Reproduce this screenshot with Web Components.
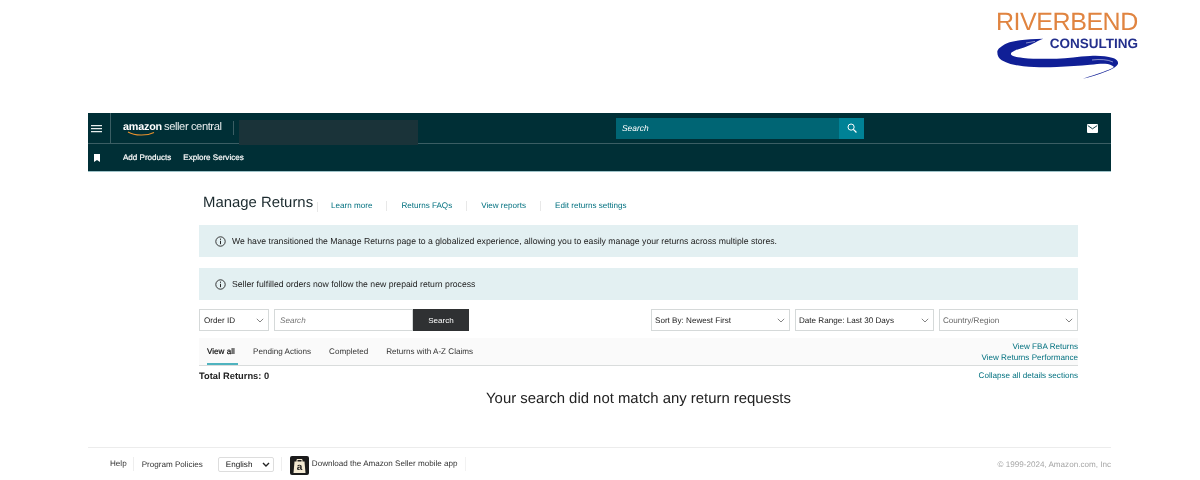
<!DOCTYPE html>
<html>
<head>
<meta charset="utf-8">
<title>Manage Returns</title>
<style>
  html, body { margin: 0; padding: 0; background: #fff; }
  body { font-family: "Liberation Sans", Arial, sans-serif; color: #111; width: 1200px; height: 480px; overflow: hidden; text-rendering: geometricPrecision; filter: blur(0.4px); }
</style>
</head>
<body>
<rb-logo></rb-logo>
<seller-header></seller-header>
<returns-page>
  <page-head></page-head>
  <info-notice>We have transitioned the Manage Returns page to a globalized experience, allowing you to easily manage your returns across multiple stores.</info-notice>
  <info-notice style="margin-top:11px">Seller fulfilled orders now follow the new prepaid return process</info-notice>
  <filter-bar></filter-bar>
  <return-tabs></return-tabs>
  <total-row></total-row>
  <empty-message>Your search did not match any return requests</empty-message>
</returns-page>
<seller-footer></seller-footer>

<script>
class RbLogo extends HTMLElement {
  constructor() {
    super();
    this.attachShadow({ mode: "open" });
    this.shadowRoot.innerHTML = `
      <style>
        :host { display: flex; justify-content: flex-end; height: 113px; padding-right: 61px; box-sizing: border-box; }
        .logo { width: 143px; height: 80px; margin-top: 8px; position: relative; }
        .name { font-size: 25px; line-height: 29px; color: #e08440; letter-spacing: -0.45px; white-space: nowrap; }
        .sub { position: absolute; right: 1px; top: 28px; font-size: 13.5px; line-height: 15px; font-weight: bold; color: #232f8c; white-space: nowrap; }
        svg { position: absolute; left: 0; top: 0; }
      </style>
      <div class="logo">
        <svg width="143" height="80" viewBox="0 0 143 80">
          <path fill="#101f96" d="M47.3 30.7 C38 31 30 31.5 24 32.3 C16 33.5 10 35 7.3 37.3 C3 40 1.3 42 1.3 44 C1.3 48 3 50.5 5.7 52.3 C12 56 20 57.5 27.3 58.3 C40 59.5 50 59.5 60.7 59 C72 58.5 84 57.5 94 56.7 C100 56 105 55.5 109 55.7 C113 56 116 57 118 59 C115 61 111 62.5 107 64 C100 66.5 93 68.5 87 70.7 C95 69.5 103 66 110.7 63.3 C116 61 120.5 59 122 55.7 C122.5 53 120 51 117 50 C110 48 102 47.5 94 48 C82 48.5 72 50.3 60.7 50.7 C48 51 37 51 27.3 50 C20 49.2 16 48 15 46.5 C14.5 45 16 44 18 43 C21 41.5 24 40.5 27.3 39.7 C33 38 40 33.5 47.3 30.7 Z"/>
          <path fill="none" stroke="#fff" stroke-width="0.5" d="M96 52 C104 51 112 51.5 117 54"/>
          <path fill="none" stroke="#fff" stroke-width="0.5" d="M30 35 C33 34.5 36 34 39 33.4"/>
        </svg>
        <div class="name">RIVERBEND</div>
        <div class="sub">CONSULTING</div>
      </div>
    `;
  }
}
customElements.define("rb-logo", RbLogo);

class SellerHeader extends HTMLElement {
  constructor() {
    super();
    this.attachShadow({ mode: "open" });
    this.shadowRoot.innerHTML = `
      <style>
        :host { display: block; width: 1023px; margin-left: 88px; background: #002f36; color: #fff; position: relative; height: 58px; box-shadow: 0 1px 0 #9fc3c9; }
        .top { height: 30px; display: flex; align-items: center; border-bottom: 1px solid #3b5e64; box-sizing: content-box; }
        .menu { width: 23px; height: 30px; display: flex; align-items: center; padding-left: 3px; box-sizing: border-box; border-right: 1px solid #3b5e64; }
        .brand { margin-left: 12px; width: 110px; font-size: 10.8px; position: relative; white-space: nowrap; line-height: 14px; top: -1px; }
        .brand b { letter-spacing: -0.2px; }
        .brand span { margin-left: 2px; font-size: 11.2px; letter-spacing: -0.42px; color: #e6eced; }
        .brand svg { position: absolute; left: 4px; top: 11px; }
        .sep { width: 1px; height: 14px; background: #3b5e64; }
        .search { margin-left: 382px; width: 248px; height: 21px; background: #006574; display: flex; justify-content: space-between; font: italic 8.4px "Liberation Sans", Arial, sans-serif; line-height: 21px; padding-left: 6px; box-sizing: border-box; }
        .search i { width: 25px; background: #008296; display: flex; align-items: center; justify-content: center; }
        .mail { margin-left: auto; margin-right: 13px; display: flex; }
        .sub { height: 27px; display: flex; align-items: center; font-size: 8.05px; }
        .mark { width: 35px; padding-left: 6px; box-sizing: border-box; display: flex; }
        .sub a { color: #fff; margin-right: 12px; -webkit-text-stroke: 0.2px #fff; }
        .mask { position: absolute; left: 151px; top: 7px; width: 179px; height: 25px; background: #1a3339; }
      </style>
      <div class="top">
        <div class="menu">
          <svg width="11" height="9" viewBox="0 0 11 9"><path fill="#e8eeee" d="M0 1h11v1.2H0zM0 4h11v1.2H0zM0 7h11v1.2H0z"/></svg>
        </div>
        <div class="brand"><b>amazon</b><span>seller central</span>
          <svg width="30" height="6" viewBox="0 0 30 6"><path fill="none" stroke="#e8912d" stroke-width="1.1" d="M1 1 C8 5 20 5 27 1.5"/></svg>
        </div>
        <div class="sep"></div>
        <div class="search"><span>Search</span><i>
          <svg width="10" height="10" viewBox="0 0 11 11"><circle cx="4.5" cy="4.5" r="3.4" fill="none" stroke="#fff" stroke-width="1.1"/><path stroke="#fff" stroke-width="1.4" d="M7 7l3.4 3.4"/></svg>
        </i></div>
        <div class="mail">
          <svg width="11" height="9" viewBox="0 0 11 9"><rect width="11" height="9" rx="1" fill="#fff"/><path fill="none" stroke="#002f36" stroke-width="0.9" d="M0.8 1.6 L5.5 4.8 L10.2 1.6"/></svg>
        </div>
      </div>
      <div class="sub">
        <div class="mark"><svg width="6" height="8" viewBox="0 0 6 8"><path fill="#fff" d="M0 0h6v8L3 6 0 8z"/></svg></div>
        <a>Add Products</a><a>Explore Services</a>
      </div>
      <div class="mask"></div>
    `;
  }
}
customElements.define("seller-header", SellerHeader);

class ReturnsPage extends HTMLElement {
  constructor() {
    super();
    this.attachShadow({ mode: "open" });
    this.shadowRoot.innerHTML = `
      <style>
        :host { display: block; width: 879px; margin-left: 199px; height: 276px; }
      </style>
      <slot></slot>
    `;
  }
}
customElements.define("returns-page", ReturnsPage);

class PageHead extends HTMLElement {
  constructor() {
    super();
    this.attachShadow({ mode: "open" });
    this.shadowRoot.innerHTML = `
      <style>
        :host { display: flex; align-items: center; height: 54px; padding: 10px 0 0 4px; box-sizing: border-box; }
        h1 { margin: 0; font-size: 14.9px; font-weight: normal; color: #1b2a2e; white-space: nowrap; width: 115px; line-height: 14px; position: relative; }
        h1::after { content: ""; position: absolute; right: 0; top: 6px; width: 1px; height: 10px; background: #e8e8e8; }
        a { color: #00707f; font-size: 8.1px; white-space: nowrap; padding-right: 14px; margin-right: 14px; border-right: 1px solid #e8e8e8; line-height: 10px; margin-top: 5px; }
        h1 + a { margin-left: 13px; }
        a:last-child { border: 0; }
      </style>
      <h1>Manage Returns</h1>
      <a>Learn more</a><a>Returns FAQs</a><a>View reports</a><a>Edit returns settings</a>
    `;
  }
}
customElements.define("page-head", PageHead);

class InfoNotice extends HTMLElement {
  constructor() {
    super();
    this.attachShadow({ mode: "open" });
    this.shadowRoot.innerHTML = `
      <style>
        :host { display: flex; align-items: center; height: 32px; background: #e3f0f2; padding-left: 16px; box-sizing: border-box; font-size: 8.69px; color: #222; white-space: nowrap; }
        svg { margin-right: 6px; }
      </style>
      <svg width="11" height="11" viewBox="0 0 11 11"><circle cx="5.5" cy="5.5" r="4.7" fill="none" stroke="#222" stroke-width="0.9"/><path stroke="#222" stroke-width="1" d="M5.5 4.8V8.2M5.5 2.6V3.8"/></svg>
      <slot></slot>
    `;
  }
}
customElements.define("info-notice", InfoNotice);

class SelectBox extends HTMLElement {
  constructor() {
    super();
    this.attachShadow({ mode: "open" });
    this.shadowRoot.innerHTML = `
      <style>
        :host { display: flex; align-items: center; justify-content: space-between; height: 22px; box-sizing: border-box; border: 1px solid #d5d9d9; background: #fff; padding: 0 4px 0 3px; font-size: 8.1px; color: #222; white-space: nowrap; }
        :host([muted]) { color: #666; }
      </style>
      <slot></slot>
      <svg width="8" height="5" viewBox="0 0 8 5"><path fill="none" stroke="#777" stroke-width="0.9" d="M0.8 0.8L4 4L7.2 0.8"/></svg>
    `;
  }
}
customElements.define("select-box", SelectBox);

class FilterBar extends HTMLElement {
  constructor() {
    super();
    this.attachShadow({ mode: "open" });
    this.shadowRoot.innerHTML = `
      <style>
        :host { display: flex; align-items: stretch; height: 22px; margin-top: 9px; }
        .order { width: 70px; padding-left: 4px; }
        .input { margin-left: 5px; width: 139px; box-sizing: border-box; border: 1px solid #d5d9d9; padding-left: 5px; font: italic 8.1px/21px "Liberation Sans", Arial, sans-serif; color: #777; }
        button { width: 56px; border: 0; padding: 0; margin: 0; background: #2f3133; color: #fff; font: 8.1px "Liberation Sans", Arial, sans-serif; }
        .right { margin-left: auto; display: flex; gap: 5px; }
        .right select-box { width: 139px; }
      </style>
      <select-box class="order">Order ID</select-box>
      <div class="input">Search</div>
      <button>Search</button>
      <div class="right">
        <select-box>Sort By: Newest First</select-box>
        <select-box>Date Range: Last 30 Days</select-box>
        <select-box muted>Country/Region</select-box>
      </div>
    `;
  }
}
customElements.define("filter-bar", FilterBar);

class ReturnTabs extends HTMLElement {
  constructor() {
    super();
    this.attachShadow({ mode: "open" });
    this.shadowRoot.innerHTML = `
      <style>
        :host { display: flex; height: 28px; box-sizing: border-box; margin-top: 7px; background: #fafafa; border-bottom: 1px solid #d9dcdc; font-size: 8.1px; color: #333; }
        .tabs { display: flex; padding-left: 8px; gap: 18px; align-items: stretch; }
        .tab { line-height: 27px; height: 25px; white-space: nowrap; }
        .active { color: #111; -webkit-text-stroke: 0.2px #111; border-bottom: 2px solid #4fb3bf; width: 31px; margin-right: -3px; }
        .links { margin-left: auto; text-align: right; color: #00707f; line-height: 11px; padding-top: 3px; }
      </style>
      <div class="tabs">
        <div class="tab active">View all</div>
        <div class="tab">Pending Actions</div>
        <div class="tab">Completed</div>
        <div class="tab">Returns with A-Z Claims</div>
      </div>
      <div class="links">View FBA Returns<br>View Returns Performance</div>
    `;
  }
}
customElements.define("return-tabs", ReturnTabs);

class TotalRow extends HTMLElement {
  constructor() {
    super();
    this.attachShadow({ mode: "open" });
    this.shadowRoot.innerHTML = `
      <style>
        :host { display: flex; justify-content: space-between; align-items: center; height: 19px; font-size: 8.1px; color: #00707f; }
        b { font-size: 9.3px; color: #222; }
      </style>
      <b>Total Returns: 0</b><span>Collapse all details sections</span>
    `;
  }
}
customElements.define("total-row", TotalRow);

class EmptyMessage extends HTMLElement {
  constructor() {
    super();
    this.attachShadow({ mode: "open" });
    this.shadowRoot.innerHTML = `
      <style>
        :host { display: block; text-align: center; font-size: 14.9px; line-height: 18px; margin-top: 5px; color: #222; }
      </style>
      <slot></slot>
    `;
  }
}
customElements.define("empty-message", EmptyMessage);

class SellerFooter extends HTMLElement {
  constructor() {
    super();
    this.attachShadow({ mode: "open" });
    this.shadowRoot.innerHTML = `
      <style>
        :host { display: flex; align-items: center; width: 1023px; margin-left: 88px; height: 33px; box-sizing: border-box; border-top: 1px solid #ececec; padding-left: 22px; font-size: 8.1px; color: #333; overflow: hidden; white-space: nowrap; }
        .help { padding-right: 6px; margin-right: 8px; border-right: 1px solid #eee; line-height: 14px; }
        .lang { width: 56px; height: 15px; box-sizing: border-box; border: 1px solid #ddd; border-radius: 2px; display: flex; align-items: center; justify-content: space-between; padding: 0 3px 0 7px; margin: 0 7px 0 15px; color: #111; }
        .sep { width: 1px; height: 14px; background: #eee; margin-right: 8px; }
        .badge { width: 19px; height: 19px; border-radius: 2px; background: #1b1b1b; display: flex; align-items: center; justify-content: center; margin: 3px 3px 0 0; }
        .app { padding-right: 7px; border-right: 1px solid #f2f2f2; line-height: 14px; }
        .copy { margin-left: auto; color: #a5a5a5; }
      </style>
      <span class="help">Help</span>
      <span>Program Policies</span>
      <span class="lang">English<svg width="8" height="5" viewBox="0 0 8 5"><path fill="none" stroke="#222" stroke-width="1.4" d="M1 1L4 4L7 1"/></svg></span>
      <span class="sep"></span>
      <span class="badge"><svg width="13" height="16" viewBox="0 0 13 16"><path fill="#f3e9d2" d="M1.5 3.5h10l1 11.5H.5z"/><path fill="none" stroke="#f3e9d2" d="M4 4V1.5h5V4"/><text x="6.5" y="11.5" text-anchor="middle" font-family="Liberation Sans, Arial, sans-serif" font-weight="bold" font-size="10" fill="#1b1b1b">a</text></svg></span>
      <span class="app">Download the Amazon Seller mobile app</span>
      <span class="copy">© 1999-2024, Amazon.com, Inc</span>
    `;
  }
}
customElements.define("seller-footer", SellerFooter);
</script>
</body>
</html>
